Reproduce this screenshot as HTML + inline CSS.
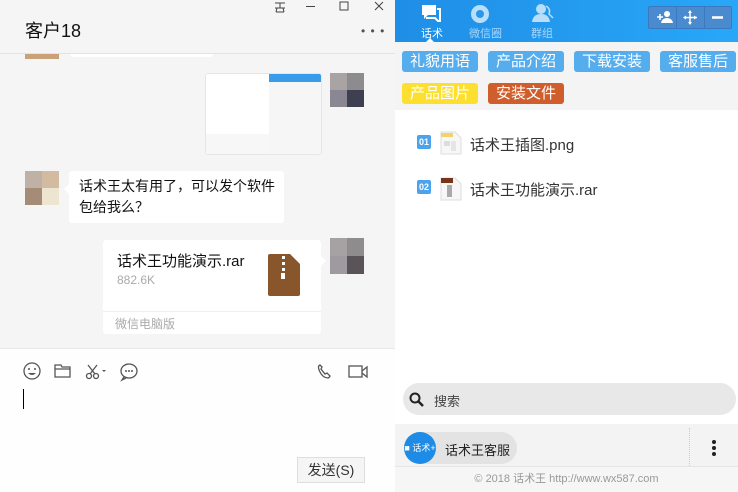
<!DOCTYPE html>
<html><head><meta charset="utf-8"><style>
*{margin:0;padding:0;box-sizing:border-box}
body{width:738px;height:492px;overflow:hidden;font-family:"Liberation Sans","Noto Sans CJK SC",sans-serif;position:relative;background:#fff}
.a{position:absolute}
.L{left:0;top:0;width:395px;height:492px;background:#f5f5f5}
.R{left:395px;top:0;width:343px;height:492px;background:#fff}
.tag{position:absolute;height:21px;border-radius:3px;color:#fff;font-size:15px;line-height:21px;text-align:center;width:76px}
.bl{background:#56adee}
.ic{stroke:#555;fill:none;stroke-width:1.3}
</style></head><body>
<div class="a L">
 <div class="a" style="left:0;top:53px;width:395px;height:1px;background:#e3e3e3"></div>
 <div class="a" style="left:25px;top:17px;font-size:18px;color:#111">客户18</div>
 <svg class="a" style="left:270px;top:0" width="125" height="14"><g stroke="#444" fill="none" stroke-width="1"><path d="M36 6.5h9"/><rect x="70" y="2" width="8" height="8"/><path d="M105 2l8 8M113 2l-8 8"/></g></svg>
 <svg class="a" style="left:270px;top:0" width="20" height="14"><g stroke="#444" fill="none"><path d="M5 3h10M10 3v5M5 8h10M7 8l-1 4M13 8l1 4M6 12h8"/></g></svg>
 <div class="a" style="left:361px;top:24px;font-size:12px;color:#555;letter-spacing:1px">• • •</div>
 <div class="a" style="left:25px;top:54px;width:34px;height:5px;background:#c9a27a"></div>
 <div class="a" style="left:70px;top:54px;width:143px;height:3px;background:#fff;border-radius:0 0 3px 3px"></div>
 <div class="a" style="left:205px;top:73px;width:117px;height:82px;background:#fff;border:1px solid #e6e6e6;border-radius:3px;overflow:hidden">
  <div class="a" style="left:63px;top:0;width:55px;height:8px;background:#3a9be8"></div>
  <div class="a" style="left:63px;top:8px;width:55px;height:74px;background:#f6f6f6"></div>
  <div class="a" style="left:0;top:60px;width:63px;height:22px;background:#f7f7f7"></div>
 </div>
 <div class="a" style="left:330px;top:73px;width:34px;height:34px;background:linear-gradient(90deg,#a9a3a4 50%,#8e8b8f 50%);"><div class="a" style="left:0;top:17px;width:34px;height:17px;background:linear-gradient(90deg,#8a8793 50%,#3e3f50 50%)"></div></div>
 <div class="a" style="left:25px;top:171px;width:34px;height:34px;background:linear-gradient(90deg,#c0b1a6 50%,#d2bba0 50%)"><div class="a" style="left:0;top:17px;width:34px;height:17px;background:linear-gradient(90deg,#a58c76 50%,#ede5d0 50%)"></div></div>
 <div class="a" style="left:69px;top:171px;width:215px;height:52px;background:#fff;border-radius:3px;font-size:14px;color:#111;padding:5px 6px 5px 10px;line-height:21px;white-space:nowrap">话术王太有用了，可以发个软件<br>包给我么？</div>
 <div class="a" style="left:64px;top:184px;width:0;height:0;border:5px solid transparent;border-right-color:#fff;border-left:0"></div>
 <div class="a" style="left:103px;top:240px;width:218px;height:94px;background:#fff;border-radius:3px">
  <div class="a" style="left:14px;top:10px;font-size:15px;color:#111">话术王功能演示.rar</div>
  <div class="a" style="left:14px;top:33px;font-size:12px;color:#aaa">882.6K</div>
  <svg class="a" style="left:165px;top:14px" width="32" height="42"><path d="M2 0h20l10 10v30a2 2 0 0 1-2 2H2a2 2 0 0 1-2-2V2a2 2 0 0 1 2-2z" fill="#89552b"/><path d="M14 2h3v3h-3zM14 8h3v3h-3zM14 14h3v3h-3zM13 19h4v6h-4z" fill="#fff"/></svg>
  <div class="a" style="left:0;top:71px;width:218px;height:1px;background:#f0f0f0"></div>
  <div class="a" style="left:12px;top:75px;font-size:12px;color:#aaa">微信电脑版</div>
 </div>
 <div class="a" style="left:321px;top:256px;width:0;height:0;border:5px solid transparent;border-left-color:#fff;border-right:0"></div>
 <div class="a" style="left:330px;top:238px;width:34px;height:36px;background:linear-gradient(90deg,#a6a2a3 50%,#8f8c8d 50%)"><div class="a" style="left:0;top:18px;width:34px;height:18px;background:linear-gradient(90deg,#9e9aa0 50%,#5a5458 50%)"></div></div>
 <div class="a" style="left:0;top:348px;width:395px;height:144px;background:#fefefe;border-top:1px solid #e7e7e7"></div>
 <svg class="a" style="left:22px;top:362px" width="350" height="20">
  <circle cx="10" cy="9" r="8" class="ic"/><circle cx="7" cy="7" r="1" fill="#555"/><circle cx="13" cy="7" r="1" fill="#555"/><path d="M6 11q4 4 8 0z" fill="#555"/>
  <path d="M33 3h6l1 2h8v10H33z M33 7h15" class="ic"/>
  <path d="M66 3l7 9M75 3l-7 9" class="ic"/><circle cx="67" cy="14" r="2.5" class="ic"/><circle cx="74" cy="14" r="2.5" class="ic"/><path d="M80 8h4l-2 2z" fill="#555"/>
  <ellipse cx="107" cy="9" rx="8" ry="7" class="ic"/><path d="M102 15l-2 3 4-2" class="ic"/><circle cx="104" cy="9" r="1" fill="#555"/><circle cx="107" cy="9" r="1" fill="#555"/><circle cx="110" cy="9" r="1" fill="#555"/>
  <path d="M298 3q-3 1 0 7t8 6q2-1 2-2l-3-3-2 1-4-5 1-2z" class="ic"/>
  <rect x="327" y="4" width="13" height="11" class="ic"/><path d="M340 9l5-4v10l-5-4" class="ic"/>
 </svg>
 <div class="a" style="left:23px;top:389px;width:1px;height:20px;background:#000"></div>
 <div class="a" style="left:297px;top:457px;width:68px;height:26px;border:1px solid #dedede;background:#f5f5f5;font-size:14px;color:#333;text-align:center;line-height:24px">发送(S)</div>
</div>
<div class="a R">
 <div class="a" style="left:0;top:0;width:343px;height:42px;background:linear-gradient(90deg,#1f8ee6,#28a7f8)"></div>
 <svg class="a" style="left:25px;top:3px" width="110" height="22"><path d="M2 2h14v10H8l-4 4v-4H2z" fill="#fff"/><path d="M17 6h3v12h-2l-3-3H6" fill="none" stroke="#fff" stroke-width="2"/>
 <circle cx="60" cy="11" r="9" fill="#b9defa"/><circle cx="60" cy="11" r="4" fill="#2a98ea"/></svg>
 <svg class="a" style="left:134px;top:2px" width="30" height="22"><circle cx="12" cy="7" r="5" fill="#b9defa"/><path d="M3 20q1-8 9-8t9 8z" fill="#b9defa"/><path d="M17 4q5 3 3 8l4 4" fill="none" stroke="#b9defa" stroke-width="1.5"/></svg>
 <div class="a" style="left:26px;top:25px;font-size:11px;color:#fff">话术</div>
 <div class="a" style="left:74px;top:25px;font-size:11px;color:#a9d6fa">微信圈</div>
 <div class="a" style="left:136px;top:25px;font-size:11px;color:#a9d6fa">群组</div>
 <div class="a" style="left:31px;top:38px;width:0;height:0;border:4px solid transparent;border-bottom-color:#fff;border-top:0"></div>
 <div class="a" style="left:253px;top:6px;width:84px;height:23px;border:1px solid #3a78c0;background:#4a8bd0;border-radius:2px"></div>
 <div class="a" style="left:281px;top:7px;width:1px;height:21px;background:#3a78c0"></div>
 <div class="a" style="left:309px;top:7px;width:1px;height:21px;background:#3a78c0"></div>
 <svg class="a" style="left:253px;top:6px" width="84" height="23"><path d="M9 11h6M12 8v6" stroke="#fff" stroke-width="1.5"/><circle cx="19" cy="8" r="3" fill="#fff"/><path d="M13 17q1-5 6-5t6 5z" fill="#fff"/>
 <path d="M42 5v13M36 11.5h13" stroke="#fff" stroke-width="1.5"/><path d="M42 4l-2 3h4zM42 19l-2-3h4zM35 11.5l3-2v4zM49 11.5l-3-2v4z" fill="#fff"/>
 <path d="M64 11.5h11" stroke="#fff" stroke-width="2.5"/></svg>
 <div class="a" style="left:0;top:42px;width:343px;height:68px;background:#f4f4f4"></div>
 <div class="tag bl" style="left:7px;top:51px">礼貌用语</div>
 <div class="tag bl" style="left:93px;top:51px">产品介绍</div>
 <div class="tag bl" style="left:179px;top:51px">下载安装</div>
 <div class="tag bl" style="left:265px;top:51px">客服售后</div>
 <div class="tag" style="left:7px;top:83px;background:#fde02f">产品图片</div>
 <div class="tag" style="left:93px;top:83px;background:#d05d2c">安装文件</div>
 <div class="a" style="left:22px;top:135px;width:14px;height:14px;background:#4aa3ec;border-radius:2px;color:#fff;font-size:9px;font-weight:bold;text-align:center;line-height:14px">01</div>
 <div class="a" style="left:22px;top:180px;width:14px;height:14px;background:#4aa3ec;border-radius:2px;color:#fff;font-size:9px;font-weight:bold;text-align:center;line-height:14px">02</div>
 <svg class="a" style="left:45px;top:131px" width="22" height="24"><path d="M1 1h14l6 6v16H1z" fill="#f7f7f7" stroke="#ddd"/><rect x="1" y="2" width="12" height="4" fill="#f2d36a"/><rect x="4" y="10" width="6" height="5" fill="#ddd"/><rect x="11" y="10" width="5" height="10" fill="#e5e5e5"/></svg>
 <svg class="a" style="left:45px;top:177px" width="22" height="24"><path d="M1 1h14l6 6v16H1z" fill="#f7f7f7" stroke="#ddd"/><rect x="1" y="1" width="12" height="5" fill="#7a3218"/><rect x="7" y="8" width="5" height="12" fill="#aaa"/></svg>
 <div class="a" style="left:75px;top:134px;font-size:15px;color:#333">话术王插图.png</div>
 <div class="a" style="left:75px;top:179px;font-size:15px;color:#333">话术王功能演示.rar</div>
 <div class="a" style="left:8px;top:383px;width:333px;height:32px;background:#e8e8e8;border-radius:16px"></div>
 <svg class="a" style="left:14px;top:392px" width="16" height="16"><circle cx="6" cy="6" r="4.5" fill="none" stroke="#222" stroke-width="2"/><path d="M9.5 9.5l4.5 4.5" stroke="#222" stroke-width="2.5"/></svg>
 <div class="a" style="left:39px;top:391px;font-size:13px;color:#444">搜索</div>
 <div class="a" style="left:0;top:424px;width:343px;height:42px;background:#f3f3f3"></div>
 <div class="a" style="left:9px;top:432px;width:113px;height:32px;background:#e3e3e3;border-radius:16px"></div>
 <div class="a" style="left:9px;top:432px;width:32px;height:32px;background:#1e8ce6;border-radius:50%;color:#fff;font-size:9px;text-align:center;line-height:32px">■ 话术+</div>
 <div class="a" style="left:50px;top:440px;font-size:13px;color:#222">话术王客服</div>
 <div class="a" style="left:294px;top:428px;width:0;height:38px;border-left:1px dotted #ccc"></div>
 <div class="a" style="left:317px;top:440px;width:4px;height:4px;background:#222;border-radius:50%"></div>
 <div class="a" style="left:317px;top:446px;width:4px;height:4px;background:#222;border-radius:50%"></div>
 <div class="a" style="left:317px;top:452px;width:4px;height:4px;background:#222;border-radius:50%"></div>
 <div class="a" style="left:0;top:466px;width:343px;height:26px;background:#f6f6f6;border-top:1px solid #e5e5e5;font-size:11px;color:#999;text-align:center;line-height:24px">© 2018 话术王 http://www.wx587.com</div>
</div>
</body></html>
